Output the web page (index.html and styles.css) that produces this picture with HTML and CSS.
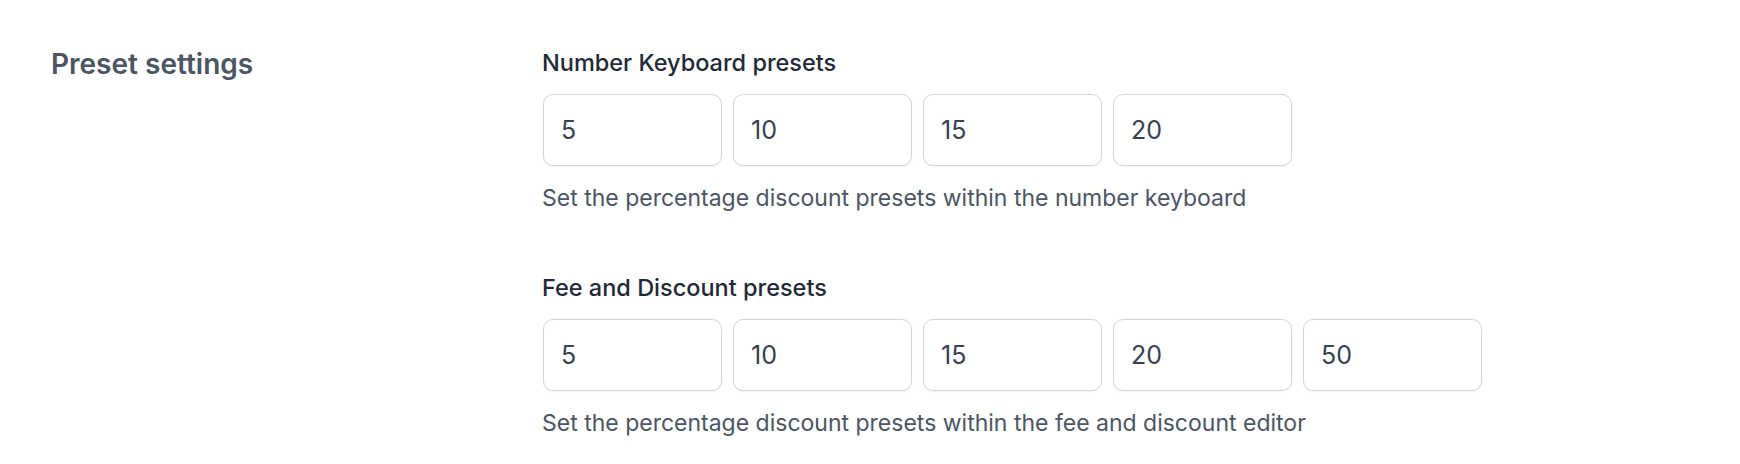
FILE: index.html
```html
<!DOCTYPE html>
<html lang="en">
<head>
<meta charset="utf-8">
<title>Preset settings</title>
<link rel="stylesheet" href="styles.css">
</head>
<body>
<section class="settings">
  <h2 class="settings-title">Preset settings</h2>
  <div class="settings-body">
    <div class="field">
      <label class="field-label">Number Keyboard presets</label>
      <div class="preset-row">
        <input class="preset-input" type="text" value="5" readonly>
        <input class="preset-input" type="text" value="10" readonly>
        <input class="preset-input" type="text" value="15" readonly>
        <input class="preset-input" type="text" value="20" readonly>
      </div>
      <p class="field-help">Set the percentage discount presets within the number keyboard</p>
    </div>
    <div class="field">
      <label class="field-label">Fee and Discount presets</label>
      <div class="preset-row">
        <input class="preset-input" type="text" value="5" readonly>
        <input class="preset-input" type="text" value="10" readonly>
        <input class="preset-input" type="text" value="15" readonly>
        <input class="preset-input" type="text" value="20" readonly>
        <input class="preset-input" type="text" value="50" readonly>
      </div>
      <p class="field-help">Set the percentage discount presets within the fee and discount editor</p>
    </div>
  </div>
</section>
</body>
</html>
```
FILE: styles.css
```css
* { box-sizing: border-box; }
html, body {
  margin: 0;
  padding: 0;
  background: #ffffff;
  font-family: Inter, "Noto Sans", "Liberation Sans", sans-serif;
}
.settings {
  display: grid;
  grid-template-columns: 491px 1fr;
  padding: 45px 0 0 51px;
}
.settings-title {
  margin: 1px 0 0;
  font-size: 28px;
  line-height: 36px;
  font-weight: 600;
  color: #4b5563;
}
.settings-body {
  display: flex;
  flex-direction: column;
  gap: 55px;
}
.field {
  display: flex;
  flex-direction: column;
}
.field-label {
  font-size: 23.5px;
  line-height: 36px;
  font-weight: 500;
  color: #1f2937;
}
.preset-row {
  display: flex;
  gap: 11px;
  margin-top: 13px;
  padding-left: 1px;
}
.preset-input {
  width: 179px;
  height: 72px;
  border: 1px solid #d1d5db;
  border-radius: 10px;
  padding: 0 17px;
  font-family: inherit;
  font-size: 25px;
  color: #374151;
  background: #ffffff;
  box-shadow: 0 1px 2px rgba(0, 0, 0, 0.05);
  outline: none;
}
.field-help {
  margin: 15px 0 0;
  font-size: 23px;
  line-height: 34px;
  color: #4b5563;
}
```
